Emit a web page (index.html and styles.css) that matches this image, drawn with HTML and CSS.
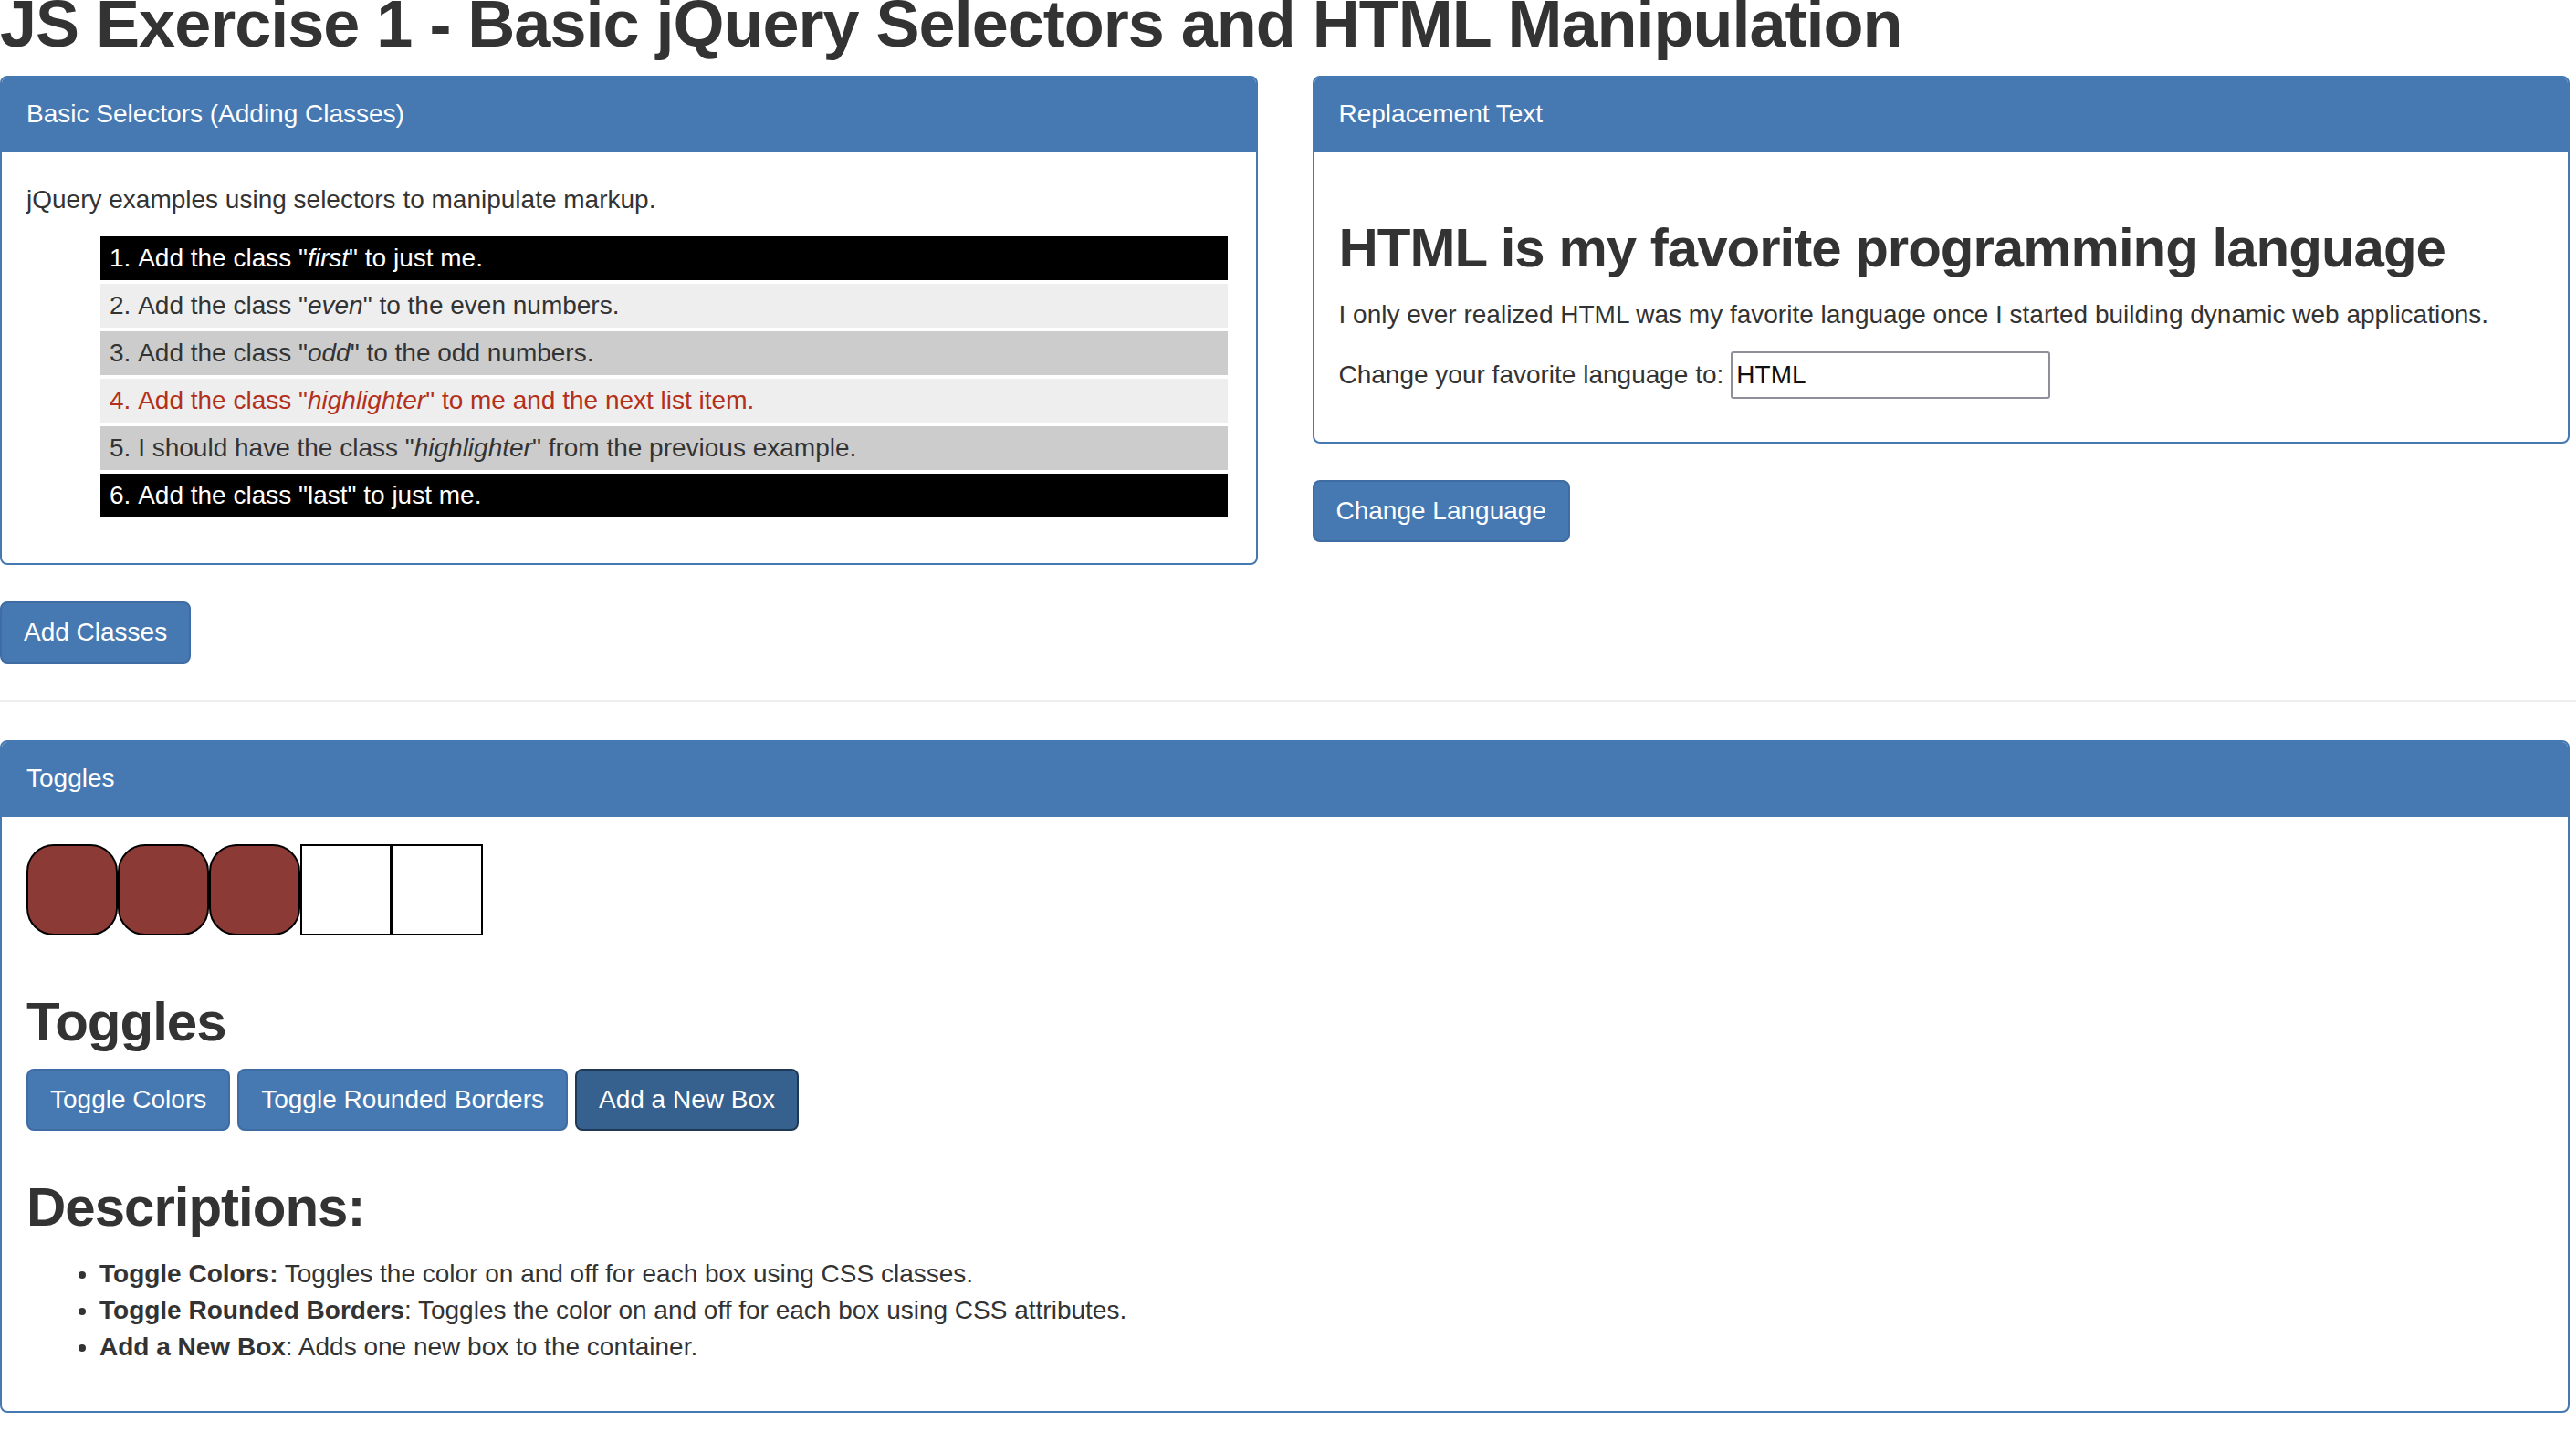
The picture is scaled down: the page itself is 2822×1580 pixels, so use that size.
FILE: index.html
```html
<!DOCTYPE html>
<html lang="en">
<head>
<meta charset="utf-8">
<title>JS Exercise 1 - Basic jQuery Selectors and HTML Manipulation</title>
<link rel="stylesheet" href="styles.css">
</head>
<body>
<div class="page">
  <h1 class="title">JS Exercise 1 - Basic jQuery Selectors and HTML Manipulation</h1>

  <div class="row">
    <div class="col">
      <section class="panel">
        <div class="panel-heading">Basic Selectors (Adding Classes)</div>
        <div class="panel-body">
          <p class="intro">jQuery examples using selectors to manipulate markup.</p>
          <ol class="sel-list">
            <li class="item-dark">Add the class "<em>first</em>" to just me.</li>
            <li class="item-even">Add the class "<em>even</em>" to the even numbers.</li>
            <li class="item-odd">Add the class "<em>odd</em>" to the odd numbers.</li>
            <li class="item-even item-highlight">Add the class "<em>highlighter</em>" to me and the next list item.</li>
            <li class="item-odd">I should have the class "<em>highlighter</em>" from the previous example.</li>
            <li class="item-dark">Add the class "last" to just me.</li>
          </ol>
        </div>
      </section>
      <button class="btn" type="button">Add Classes</button>
    </div>

    <div class="col">
      <section class="panel">
        <div class="panel-heading">Replacement Text</div>
        <div class="panel-body">
          <h2 class="lang-title">HTML is my favorite programming language</h2>
          <p class="lang-text">I only ever realized HTML was my favorite language once I started building dynamic web applications.</p>
          <div class="lang-form">
            <label class="lang-label" for="lang">Change your favorite language to:</label>
            <input class="lang-input" id="lang" type="text" value="HTML">
          </div>
        </div>
      </section>
      <button class="btn" type="button">Change Language</button>
    </div>
  </div>

  <hr class="divider">

  <section class="panel panel-toggles">
    <div class="panel-heading">Toggles</div>
    <div class="panel-body">
      <div class="boxes">
        <div class="box box-on"></div>
        <div class="box box-on"></div>
        <div class="box box-on"></div>
        <div class="box"></div>
        <div class="box"></div>
      </div>
      <h2 class="toggles-title">Toggles</h2>
      <div class="btn-row">
        <button class="btn" type="button">Toggle Colors</button>
        <button class="btn" type="button">Toggle Rounded Borders</button>
        <button class="btn btn-active" type="button">Add a New Box</button>
      </div>
      <h2 class="desc-title">Descriptions:</h2>
      <ul class="desc-list">
        <li><strong>Toggle Colors:</strong> Toggles the color on and off for each box using CSS classes.</li>
        <li><strong>Toggle Rounded Borders</strong>: Toggles the color on and off for each box using CSS attributes.</li>
        <li><strong>Add a New Box</strong>: Adds one new box to the container.</li>
      </ul>
    </div>
  </section>
</div>
</body>
</html>
```

FILE: styles.css
```css
* {
  box-sizing: border-box;
}

html, body {
  margin: 0;
  padding: 0;
  background: #ffffff;
}

body {
  font-family: "Liberation Sans", Arial, Helvetica, sans-serif;
  font-size: 28px;
  line-height: 40px;
  color: #333333;
  overflow: hidden;
}

.page {
  padding-right: 7px;
}

.title {
  margin: -13px 0 17px;
  font-size: 72px;
  line-height: 79px;
  font-weight: 700;
  letter-spacing: -1px;
  white-space: nowrap;
}

.row {
  display: grid;
  grid-template-columns: 1fr 1fr;
  column-gap: 60px;
  align-items: start;
}

.panel {
  border: 2px solid #4678b2;
  border-radius: 8px;
  margin-bottom: 40px;
  background: #ffffff;
  overflow: hidden;
}

.panel-heading {
  background: #4678b2;
  color: #ffffff;
  padding: 20px 27px;
  border-bottom: 2px solid #4678b2;
  line-height: 40px;
}

.panel-body {
  padding: 32px 27px 30px;
}

.intro {
  margin: 0 0 20px;
}

.sel-list {
  list-style: decimal inside;
  margin: 0 4px 20px 0;
  padding: 0 0 0 81px;
}

.sel-list li {
  padding: 4px 10px;
  margin-bottom: 4px;
}

.sel-list li:last-child {
  margin-bottom: 0;
}

.item-dark {
  background: #000000;
  color: #ffffff;
}

.item-even {
  background: #eeeeee;
}

.item-odd {
  background: #cccccc;
}

.item-highlight {
  color: #b3301b;
}

.lang-title {
  margin: 40px 0 20px;
  font-size: 60px;
  line-height: 66px;
  font-weight: 700;
  letter-spacing: -1px;
}

.lang-text {
  margin: 0 0 20px;
}

.lang-form {
  display: flex;
  align-items: baseline;
  gap: 8px;
  margin-bottom: 17px;
}

.lang-input {
  width: 350px;
  height: 52px;
  padding: 0 4px;
  border: 2px solid #8f8f9b;
  border-radius: 3px;
  font-family: inherit;
  font-size: 28px;
  color: #111111;
  background: #ffffff;
}

.btn {
  display: inline-block;
  font-family: inherit;
  font-size: 28px;
  line-height: 40px;
  padding: 12px 24px;
  color: #ffffff;
  background: #4678b2;
  border: 2px solid #3e6ca3;
  border-radius: 8px;
  cursor: pointer;
}

.btn-active {
  background: #36608e;
  border-color: #1f3856;
}

.divider {
  margin: 40px -7px 42px 0;
  border: 0;
  border-top: 2px solid #eeeeee;
  height: 0;
}

.panel-toggles .panel-body {
  padding: 30px 27px 30px;
}

.boxes {
  display: flex;
  margin-bottom: 0;
}

.box {
  width: 100px;
  height: 100px;
  border: 2px solid #000000;
  background: #ffffff;
}

.box-on {
  background: #8b3a36;
  border-radius: 30px;
}

.toggles-title {
  margin: 62px 0 18px;
  font-size: 60px;
  line-height: 66px;
  font-weight: 700;
  letter-spacing: -1px;
}

.btn-row {
  display: flex;
  gap: 8px;
}

.desc-title {
  margin: 51px 0 20px;
  font-size: 60px;
  line-height: 66px;
  font-weight: 700;
  letter-spacing: -1px;
}

.desc-list {
  margin: 0 0 20px;
  padding-left: 80px;
}
```
